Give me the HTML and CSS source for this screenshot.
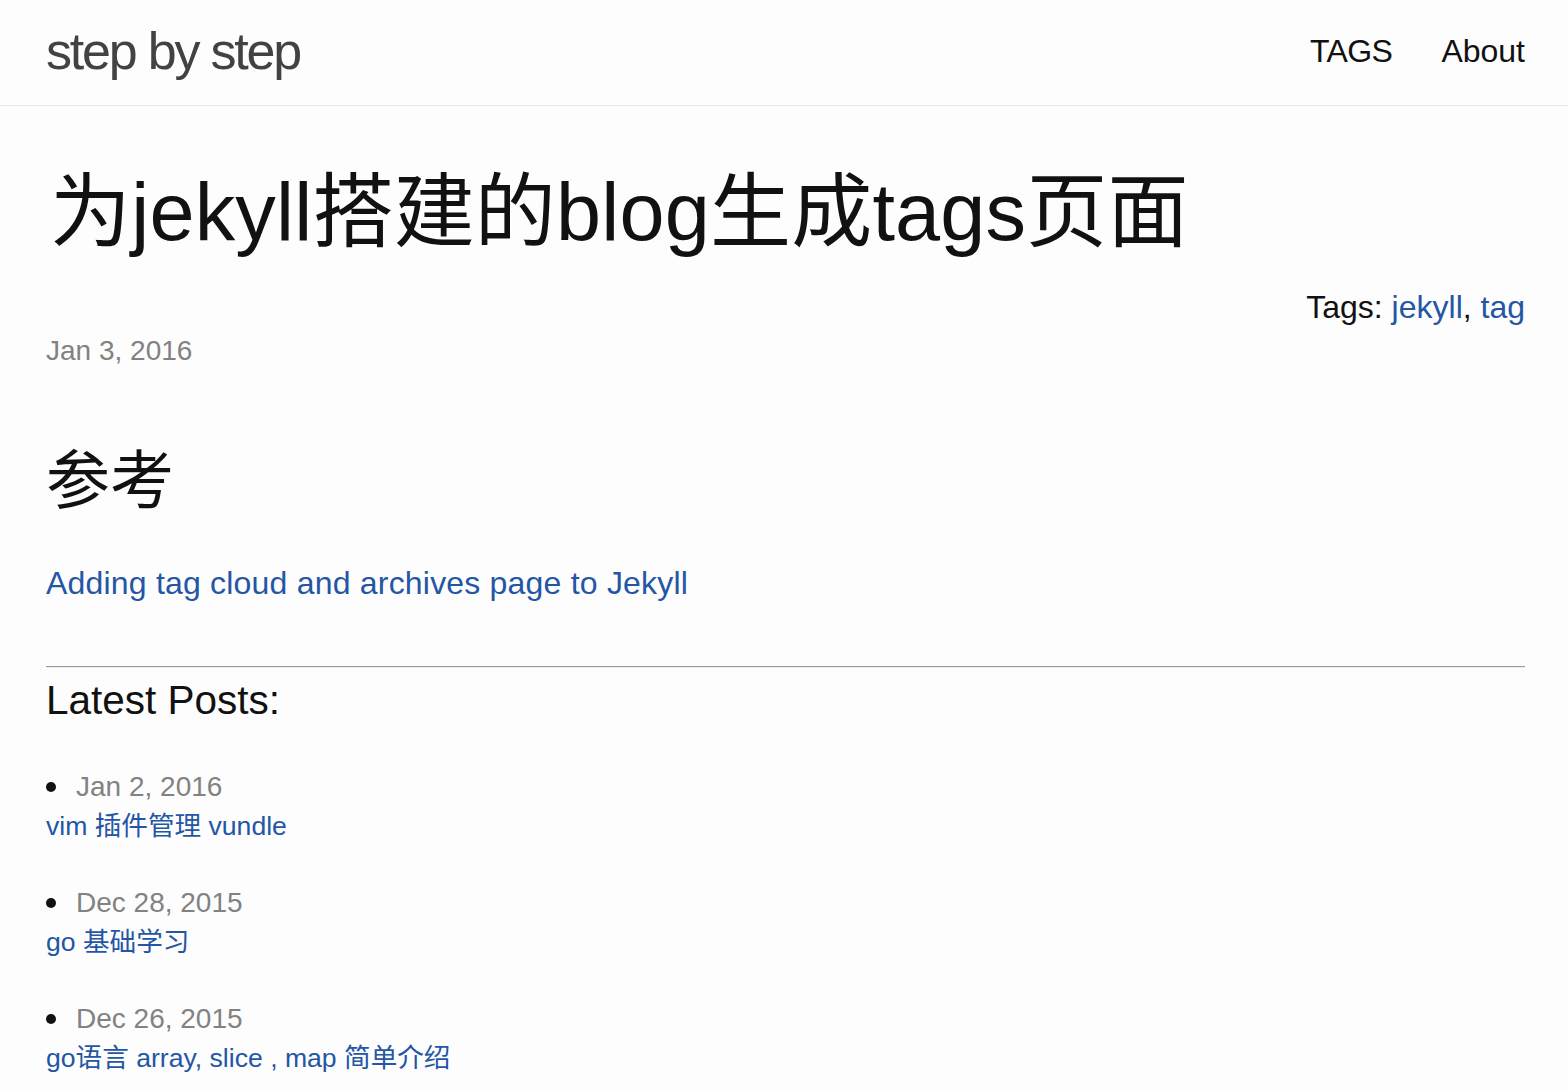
FILE: index.html
```html
<!DOCTYPE html>
<html lang="zh-CN">
<head>
<meta charset="utf-8">
<title>为jekyll搭建的blog生成tags页面</title>
<link rel="stylesheet" href="styles.css">
</head>
<body>
<header class="site-header">
  <div class="wrapper header-inner">
    <a class="site-title" href="#">step by step</a>
    <nav class="site-nav">
      <a class="nav-link" href="#">TAGS</a>
      <a class="nav-link" href="#">About</a>
    </nav>
  </div>
</header>
<main class="wrapper page">
  <article class="post">
    <h1 class="post-title">为jekyll搭建的blog生成tags页面</h1>
    <p class="post-tags">Tags: <a href="#">jekyll</a>, <a href="#">tag</a></p>
    <p class="post-meta">Jan 3, 2016</p>
    <div class="post-content">
      <h2 class="content-heading">参考</h2>
      <p class="content-link"><a href="#">Adding tag cloud and archives page to Jekyll</a></p>
    </div>
  </article>
  <hr class="divider">
  <section class="latest">
    <h3 class="latest-title">Latest Posts:</h3>
    <ul class="latest-list">
      <li class="latest-item">
        <div class="latest-date"><span class="bullet"></span><span>Jan 2, 2016</span></div>
        <a class="latest-link" href="#">vim 插件管理 vundle</a>
      </li>
      <li class="latest-item">
        <div class="latest-date"><span class="bullet"></span><span>Dec 28, 2015</span></div>
        <a class="latest-link" href="#">go 基础学习</a>
      </li>
      <li class="latest-item">
        <div class="latest-date"><span class="bullet"></span><span>Dec 26, 2015</span></div>
        <a class="latest-link" href="#">go语言 array, slice , map 简单介绍</a>
      </li>
    </ul>
  </section>
</main>
</body>
</html>
```
FILE: styles.css
```css
html, body {
  margin: 0;
  padding: 0;
}
body {
  background: #fdfdfd;
  color: #111;
  font-family: "Liberation Sans", Arial, "Noto Sans CJK SC", sans-serif;
}
a {
  color: #2456a5;
  text-decoration: none;
}
.wrapper {
  padding: 0 43px 0 46px;
}
.site-header {
  border-bottom: 1px solid #e8e8e8;
  height: 105px;
}
.header-inner {
  height: 101px;
  display: flex;
  align-items: center;
  justify-content: space-between;
}
.site-title {
  font-size: 52px;
  line-height: 1;
  letter-spacing: -2.2px;
  color: #424242;
}
.site-nav {
  display: flex;
  gap: 49px;
}
.nav-link {
  font-size: 32px;
  line-height: 1;
  color: #111;
}
.nav-link:first-child {
  letter-spacing: -0.6px;
}
.post-title {
  margin: 62px 0 0 4px;
  font-size: 81px;
  line-height: 88px;
  font-weight: normal;
  letter-spacing: 0.2px;
}
.post-tags {
  margin: 30px 0 0;
  text-align: right;
  font-size: 32px;
  line-height: 42px;
}
.post-meta {
  margin: 2px 0 0;
  font-size: 28px;
  line-height: 42px;
  color: #828282;
}
.content-heading {
  margin: 69px 0 0;
  font-size: 64px;
  line-height: 80px;
  font-weight: normal;
}
.content-link {
  margin: 41px 0 0;
  font-size: 32px;
  line-height: 42px;
  letter-spacing: 0.2px;
}
.divider {
  margin: 62px 0 0;
  border: 0;
  border-top: 1px solid #9a9a9a;
  border-bottom: 1px solid #eeeeee;
  height: 0;
}
.latest-title {
  margin: 6px 0 0;
  font-size: 40.5px;
  line-height: 52px;
  font-weight: normal;
}
.latest-list {
  list-style: none;
  margin: 41px 0 0;
  padding: 0;
  display: flex;
  flex-direction: column;
  gap: 36px;
}
.latest-item {
  display: flex;
  flex-direction: column;
}
.latest-date {
  display: flex;
  align-items: center;
  gap: 20px;
  font-size: 28px;
  line-height: 39px;
  color: #828282;
}
.bullet {
  width: 10px;
  height: 10px;
  border-radius: 50%;
  background: #111;
}
.latest-link {
  font-size: 26.6px;
  line-height: 41px;
}
```
